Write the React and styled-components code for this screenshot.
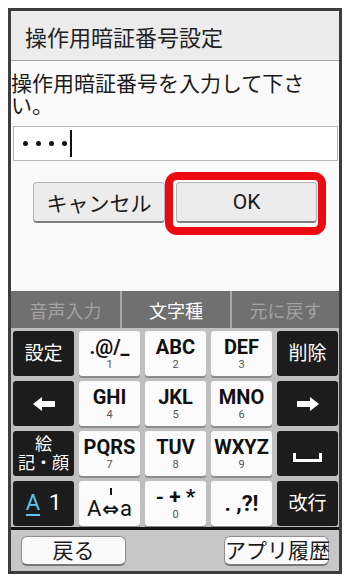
import React from 'react';
import styled, { createGlobalStyle } from 'styled-components';

const GlobalStyle = createGlobalStyle`
  html, body {
    margin: 0;
    padding: 0;
    background: #ffffff;
  }
  body {
    font-family: 'Roboto', 'Noto Sans CJK JP', sans-serif;
  }
  * {
    box-sizing: border-box;
  }
`;

const Frame = styled.div`
  margin: 8px 0 0 8px;
  width: 334px;
  height: 566px;
  border: 3px solid #3d3d3d;
  background: #fafafa;
  display: flex;
  flex-direction: column;
`;

const TitleBar = styled.div`
  height: 50px;
  flex: none;
  background: #ececec;
  border-bottom: 1px solid #a6a6a6;
  display: flex;
  align-items: center;
  padding-left: 14px;
  font-size: 22px;
  color: #222;
`;

const Body = styled.div`
  height: 230px;
  flex: none;
  padding-top: 12px;
  background: #fafafa;
`;

const Message = styled.p`
  margin: 0;
  font-size: 21px;
  line-height: 22px;
  color: #1a1a1a;
`;

const Field = styled.div`
  margin: 9px 1px 0 2px;
  height: 35px;
  background: #fff;
  border: 1px solid #b5b5b5;
  display: flex;
  align-items: center;
  padding-left: 9px;
`;

const Dot = styled.span`
  width: 5px;
  height: 5px;
  border-radius: 50%;
  background: #111;
  margin-right: 8px;
`;

const Caret = styled.span`
  width: 2px;
  height: 27px;
  background: #111;
  margin-left: -5px;
`;

const ButtonRow = styled.div`
  display: flex;
  justify-content: center;
  gap: 11px;
  margin-top: 21px;
`;

const DialogButton = styled.button`
  width: ${(p) => p.$w}px;
  height: 41px;
  background: #ececec;
  border: 1px solid #b3b3b3;
  border-bottom: 2px solid #7d7d7d;
  border-radius: 4px;
  font-family: inherit;
  font-size: 21px;
  color: #1a1a1a;
  padding: 0;
`;

const HighlightWrap = styled.div`
  position: relative;
  display: flex;
`;

const Highlight = styled.span`
  position: absolute;
  top: -10px;
  left: -11px;
  right: -9px;
  bottom: -12px;
  border: 8px solid #eb0a0f;
  border-radius: 12px;
  pointer-events: none;
`;

const Toolbar = styled.div`
  height: 37px;
  flex: none;
  background: #707070;
  display: grid;
  grid-template-columns: 109px 110px 1fr;
`;

const ToolItem = styled.div`
  display: flex;
  align-items: center;
  justify-content: center;
  font-size: 18px;
  color: ${(p) => (p.$active ? '#ffffff' : '#a2a2a2')};
  border-left: ${(p) => (p.$first ? 'none' : '2px solid #a9a9a9')};
`;

const Keys = styled.div`
  height: 199px;
  flex: none;
  background: #bfbfbf;
  padding: 3px 1px 1px 2px;
  display: grid;
  grid-template-columns: repeat(5, 61px);
  grid-auto-rows: 45px;
  gap: 5px;
`;

const DarkKey = styled.div`
  background: #1c1c1c;
  border-radius: 3px;
  color: #fff;
  font-size: ${(p) => (p.$small ? '17px' : '19px')};
  line-height: ${(p) => (p.$small ? '19px' : '22px')};
  display: flex;
  flex-direction: column;
  align-items: center;
  justify-content: center;
`;

const WhiteKey = styled.div`
  background: #fbfbfb;
  border-radius: 3px;
  box-shadow: 0 2px 0 #8c8c8c;
  display: flex;
  flex-direction: column;
  align-items: center;
  justify-content: center;
  color: #111;
`;

const Label = styled.span`
  font-size: ${(p) => p.$size || 20}px;
  line-height: 22px;
  font-weight: ${(p) => (p.$regular ? 400 : 700)};
  white-space: nowrap;
`;

const Swap = styled.span`
  font-family: 'DejaVu Sans', sans-serif;
  font-size: 20px;
  font-weight: 700;
  margin: 0 1px;
`;

const Num = styled.span`
  font-size: 11px;
  line-height: 13px;
  color: #555;
`;

const Tick = styled.span`
  width: 2px;
  height: 7px;
  background: #111;
  margin: 0 0 3px 2px;
`;

const ModeLabel = styled.div`
  display: flex;
  align-items: baseline;
  gap: 9px;
  font-size: 22px;
  line-height: 24px;
`;

const Under = styled.span`
  color: #5cc4ee;
  border-bottom: 2px solid #5cc4ee;
  line-height: 22px;
`;

const Divider = styled.div`
  height: 3px;
  flex: none;
  background: #151515;
`;

const NavBar = styled.div`
  flex: 1;
  background: #c6c6c6;
  display: flex;
  justify-content: space-between;
  padding: 6px 10px 0 10px;
`;

const NavButton = styled.button`
  width: 105px;
  height: 30px;
  background: #fafafa;
  border: 1px solid #8e8e8e;
  border-bottom: 2px solid #777;
  border-radius: 6px;
  font-family: inherit;
  font-size: 21px;
  line-height: 26px;
  color: #1a1a1a;
  padding: 0;
  white-space: nowrap;
`;

const Arrow = ({ right }) => (
  <svg width="22" height="14" viewBox="0 0 22 14" style={right ? { transform: 'scaleX(-1)' } : undefined}>
    <polygon points="0,7 9,0 9,4 22,4 22,10 9,10 9,14" fill="#fff" />
  </svg>
);

const SpaceMark = () => (
  <svg width="29" height="9" viewBox="0 0 29 9" style={{ marginTop: 8 }}>
    <path d="M1.5 0 V7.5 H27.5 V0" fill="none" stroke="#fff" strokeWidth="3" />
  </svg>
);

const numKeys = [
  ['.@/_', '1'],
  ['ABC', '2'],
  ['DEF', '3'],
  ['GHI', '4'],
  ['JKL', '5'],
  ['MNO', '6'],
  ['PQRS', '7'],
  ['TUV', '8'],
  ['WXYZ', '9'],
];

const NumKey = ({ label, num }) => (
  <WhiteKey>
    <Label>{label}</Label>
    <Num>{num}</Num>
  </WhiteKey>
);

export default function App() {
  return (
    <>
      <GlobalStyle />
      <Frame>
        <TitleBar>操作用暗証番号設定</TitleBar>
        <Body>
          <Message>
            操作用暗証番号を入力して下さ
            <br />
            い。
          </Message>
          <Field>
            <Dot />
            <Dot />
            <Dot />
            <Dot />
            <Caret />
          </Field>
          <ButtonRow>
            <DialogButton $w={132}>キャンセル</DialogButton>
            <HighlightWrap>
              <DialogButton $w={141}>OK</DialogButton>
              <Highlight />
            </HighlightWrap>
          </ButtonRow>
        </Body>
        <Toolbar>
          <ToolItem $first>音声入力</ToolItem>
          <ToolItem $active>文字種</ToolItem>
          <ToolItem>元に戻す</ToolItem>
        </Toolbar>
        <Keys>
          <DarkKey>設定</DarkKey>
          {numKeys.slice(0, 3).map(([l, n]) => (
            <NumKey key={l} label={l} num={n} />
          ))}
          <DarkKey>削除</DarkKey>

          <DarkKey>
            <Arrow />
          </DarkKey>
          {numKeys.slice(3, 6).map(([l, n]) => (
            <NumKey key={l} label={l} num={n} />
          ))}
          <DarkKey>
            <Arrow right />
          </DarkKey>

          <DarkKey $small>
            <span>絵</span>
            <span>記・顔</span>
          </DarkKey>
          {numKeys.slice(6, 9).map(([l, n]) => (
            <NumKey key={l} label={l} num={n} />
          ))}
          <DarkKey>
            <SpaceMark />
          </DarkKey>

          <DarkKey>
            <ModeLabel>
              <Under>A</Under>
              <span>1</span>
            </ModeLabel>
          </DarkKey>
          <WhiteKey>
            <Tick />
            <Label $regular $size={22}>
              A<Swap>⇔</Swap>a
            </Label>
          </WhiteKey>
          <WhiteKey>
            <Label $size={21}>- + *</Label>
            <Num>0</Num>
          </WhiteKey>
          <WhiteKey>
            <Label $size={22}>. ,?!</Label>
          </WhiteKey>
          <DarkKey>改行</DarkKey>
        </Keys>
        <Divider />
        <NavBar>
          <NavButton>戻る</NavButton>
          <NavButton>アプリ履歴</NavButton>
        </NavBar>
      </Frame>
    </>
  );
}
